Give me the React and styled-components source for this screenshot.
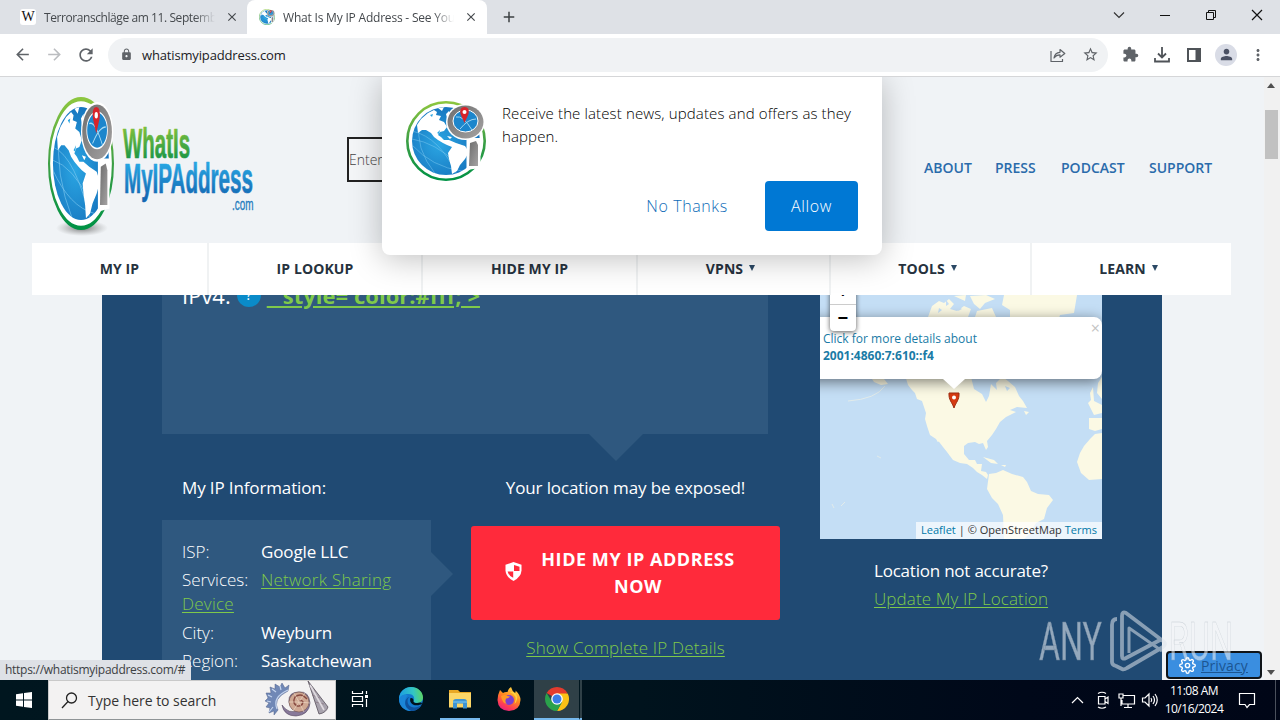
import React from 'react'
import styled, { createGlobalStyle, css } from 'styled-components'
import {
  MdArrowBack, MdArrowForward, MdRefresh, MdLock, MdStarBorder, MdExtension,
  MdPerson, MdMoreVert, MdClose, MdAdd
} from 'react-icons/md'
import { FiSettings } from 'react-icons/fi'

const GlobalStyle = createGlobalStyle`
  * { box-sizing: border-box; }
  body {
    margin: 0;
    overflow: hidden;
    font-family: 'Open Sans', 'Noto Sans', sans-serif;
  }
  svg { display: block; flex: none; }
  button, input { font: inherit; }
`

const Screen = styled.div`
  position: relative;
  width: 1280px;
  height: 720px;
  display: flex;
  flex-direction: column;
  overflow: hidden;
`

/* ---------- browser chrome ---------- */

const TabStrip = styled.div`
  height: 34px;
  background: #dee1e6;
  display: flex;
  align-items: stretch;
`

const Tab = styled.div`
  width: ${({ $active }) => ($active ? 240 : 247)}px;
  padding: ${({ $active }) => ($active ? '0 9px 0 12px' : '0 8px 0 20px')};
  background: ${({ $active }) => ($active ? '#fff' : 'transparent')};
  border-radius: 8px 8px 0 0;
  display: flex;
  align-items: center;
  color: #45494d;
`

const TabTitle = styled.span`
  width: 171px;
  margin: 0 auto 0 8px;
  overflow: hidden;
  white-space: nowrap;
  font-size: 12px;
  letter-spacing: ${({ $ls }) => $ls || 0}px;
  mask-image: linear-gradient(90deg, #000 88%, transparent);
`

const WikiIcon = styled.span`
  width: 16px;
  height: 16px;
  border-radius: 3px;
  background: #fff;
  color: #111;
  font: 400 14px/16px 'Liberation Serif', serif;
  text-align: center;
`

const NewTab = styled.div`
  display: flex;
  align-items: center;
  padding-left: 13px;
  color: #3c4043;
`

const WindowButtons = styled.div`
  margin-left: auto;
  display: flex;
  align-items: center;
  padding: 0 0 5px;

  svg { margin-right: 30px; }
  svg:first-child { margin-right: 32px; }
  svg:last-child { margin-right: 15px; }
`

const Toolbar = styled.div`
  height: 43px;
  padding: 0 6px 1px;
  background: #fff;
  border-bottom: 1px solid #d5d6d8;
  display: flex;
  align-items: center;
  color: #5f6368;
`

const IconSlot = styled.span`
  width: 32px;
  height: 32px;
  flex: none;
  display: grid;
  place-items: center;
`

const Omnibox = styled.div`
  width: 1000px;
  height: 34px;
  flex: none;
  margin: 0 6px;
  padding: 0 2px;
  border-radius: 17px;
  background: #f0f2f4;
  display: flex;
  align-items: center;
`

const Url = styled.span`
  margin-right: auto;
  color: #202124;
  font-size: 13px;
  letter-spacing: -0.15px;
`

const Avatar = styled.span`
  width: 22px;
  height: 22px;
  border-radius: 50%;
  background: #d9dce6;
  color: #4b5164;
  display: grid;
  place-items: center;
`

/* ---------- page ---------- */

const Viewport = styled.div`
  position: relative;
  height: 603px;
  display: flex;
`

const Page = styled.div`
  width: 1264px;
  height: 603px;
  overflow: hidden;
  background: #f0f3f6;
`

const Scrollbar = styled.div`
  width: 16px;
  padding: 6px 2px 5px 0;
  background: #f1f1f1;
  display: flex;
  flex-direction: column;
  align-items: center;
`

const Thumb = styled.div`
  width: 13px;
  height: 49px;
  margin: 22px 0 auto;
  background: #c1c1c1;
`

const Triangle = styled.i`
  border: 4px solid transparent;
  ${({ $down }) => $down
    ? css`border-top: 5px solid #505050; border-bottom: 0;`
    : css`border-bottom: 5px solid #505050; border-top: 0;`}
`

const SiteHeader = styled.header`
  height: 166px;
  padding: 0 51px 0 48px;
  display: flex;
`

const SearchInput = styled.input`
  width: 300px;
  height: 45px;
  margin: 60px 0 0 91px;
  padding: 0;
  border: 2px solid #222;
  background: #f4f6f8;
  font-size: 14px;
  font-weight: 300;

  &::placeholder { color: #444; opacity: 1; }
`

const TopLinks = styled.nav`
  margin-left: auto;
  padding-top: 81px;
  display: flex;
  gap: 24px;
`

const TopLink = styled.a`
  width: ${({ $w }) => $w}px;
  color: #2a6bab;
  font-size: 14px;
  font-weight: 600;
  line-height: 20px;
  white-space: nowrap;
`

const MainNav = styled.nav`
  width: 1199px;
  height: 52px;
  margin-left: 32px;
  background: #fff;
  display: flex;
`

const NavItem = styled.a`
  width: ${({ $w }) => $w}px;
  padding: 0 ${({ $menu }) => ($menu ? 6 : 0)}px 2px 0;
  display: flex;
  align-items: center;
  justify-content: center;
  gap: 6px;
  border-right: 2px solid #f0f2f3;
  color: #26323e;
  font-size: 14px;
  font-weight: 700;
  letter-spacing: 0.1px;

  &:last-child { border-right: 0; }
`

const Caret = styled.i`
  border: 3.5px solid transparent;
  border-top: 6px solid #2b4965;
  border-bottom: 0;
`

const Panel = styled.main`
  width: 1060px;
  height: 385px;
  margin-left: 102px;
  padding: 0 60px;
  background: #204a73;
  color: #fff;
  display: flex;
  gap: 40px;
  overflow: hidden;
`

const Details = styled.section`
  width: 618px;
`

const AddressBox = styled.div`
  width: 606px;
  height: 139px;
  padding-left: 20px;
  background: #2f587f;
  overflow: hidden;
`

const AddressRow = styled.div`
  height: 32px;
  margin-top: -16px;
  display: flex;
  align-items: center;
  font-size: 22px;
  white-space: nowrap;
`

const Help = styled.span`
  width: 24px;
  height: 24px;
  margin: 0 6px 0 6px;
  border-radius: 50%;
  background: #0a8bc9;
  font-size: 14px;
  line-height: 24px;
  text-align: center;
`

const Link = styled.a`
  color: #7fc94a;
  text-decoration: underline;
  font-weight: ${({ $bold }) => ($bold ? 700 : 300)};
  letter-spacing: ${({ $ls }) => $ls || 0}px;
  text-underline-offset: 2px;
`

const DownNotch = styled.div`
  width: 0;
  margin-left: 427px;
  border: 27px solid transparent;
  border-top-color: #2f587f;
  border-bottom: 0;
`

const Columns = styled.div`
  display: flex;
  gap: 40px;
  font-size: 17px;
  font-weight: 300;
`

const Column = styled.div`
  width: ${({ $w }) => $w}px;
  padding-top: 15px;
`

const Title = styled.h2`
  margin: 0;
  padding-left: ${({ $center }) => ($center ? 0 : 20)}px;
  text-align: ${({ $center }) => ($center ? 'center' : 'left')};
  font-size: 17px;
  font-weight: 400;
  line-height: 24px;
  letter-spacing: -0.13px;
  white-space: nowrap;
`

const InfoBox = styled.div`
  height: 160px;
  margin-top: 20px;
  background: #2f587f;
  display: flex;
`

const InfoList = styled.ul`
  width: 269px;
  flex: none;
  margin: 0;
  padding: 20px 20px 0;
  list-style: none;
`

const InfoRow = styled.li`
  margin-bottom: 4.3px;
  line-height: 24px;
`

const InfoLabel = styled.span`
  display: inline-block;
  width: 79px;
`

const InfoValue = styled.span`
  font-weight: 400;
  letter-spacing: -0.14px;
`

const RightNotch = styled.div`
  flex: none;
  height: 0;
  margin-top: 32px;
  border: 22px solid transparent;
  border-left-color: #2f587f;
  border-right: 0;
`

const HideButton = styled.button`
  width: 309px;
  height: 94px;
  margin: 26px 0 15px;
  padding: 0 35px 0 34px;
  border: 0;
  border-radius: 3px;
  background: #ff2a3b;
  color: #fff;
  display: flex;
  align-items: center;
  justify-content: space-between;
  font-size: 18px;
  font-weight: 700;
  line-height: 27px;
  letter-spacing: 0.55px;

  svg { margin-bottom: 3px; }
`

const HideLabel = styled.span`
  width: 214px;
`

const Centered = styled.div`
  text-align: center;
  line-height: 26px;
`

const MapColumn = styled.section`
  width: 282px;
  font-size: 17px;
`

const MapNote = styled.div`
  margin: 18px 0 0 54px;
  line-height: 28px;
  letter-spacing: -0.22px;
  white-space: nowrap;
`

const MapCanvas = styled.div`
  position: relative;
  width: 282px;
  height: 244px;
  overflow: hidden;
  background: #c4def5;
`

const MapPopup = styled.div`
  position: absolute;
  top: 22px;
  left: -20px;
  width: 302px;
  height: 62px;
  padding: 13px 8px 0 23px;
  border-radius: 8px;
  background: #fff;
  box-shadow: 0 3px 14px rgba(0, 0, 0, 0.5);
  color: #1a7ba6;
  font-size: 12px;
  line-height: 17px;
`

const PopupTip = styled.i`
  position: absolute;
  top: 84px;
  left: 123px;
  border: 11px solid transparent;
  border-top: 10px solid #fff;
  border-bottom: 0;
`

const PopupClose = styled.span`
  position: absolute;
  top: 3px;
  right: 2px;
  color: #c3c3c3;
  font-size: 16px;
`

const ZoomControl = styled.div`
  position: absolute;
  top: -17px;
  left: 10px;
  width: 26px;
  height: 53px;
  border-radius: 4px;
  background: #fff;
  box-shadow: 0 1px 5px rgba(0, 0, 0, 0.65);
  color: #000;
  font: 700 18px/26px 'Liberation Mono', monospace;
  text-align: center;

  div:first-child { border-bottom: 1px solid #ccc; height: 27px; line-height: 28px; }
  div:last-child { line-height: 28px; }
`

const Attribution = styled.div`
  position: absolute;
  right: 0;
  bottom: 0;
  width: 186px;
  height: 17px;
  padding-left: 5px;
  background: rgba(255, 255, 255, 0.7);
  color: #333;
  font-size: 11px;
  line-height: 16px;
  letter-spacing: 0.03px;
  white-space: nowrap;

  a { color: #0078a8; }
`

/* ---------- things lying over the page ---------- */

const Prompt = styled.div`
  position: absolute;
  top: 0;
  left: 382px;
  width: 500px;
  height: 178px;
  padding: 24px;
  border-radius: 0 0 8px 8px;
  background: #fff;
  box-shadow: 0 4px 32px rgba(0, 0, 0, 0.25);
  clip-path: inset(0 -60px -60px -60px);
  display: grid;
  grid-template: 80px 50px / 80px 1fr;
  column-gap: 16px;
`

const PromptText = styled.p`
  margin: 1px -10px 0 0;
  color: #000;
  font-size: 15px;
  font-weight: 300;
  line-height: 23px;
  letter-spacing: 0.13px;
`

const PromptActions = styled.div`
  grid-column: 1 / 3;
  display: flex;
  justify-content: flex-end;
  gap: 14px;
`

const PromptButton = styled.button`
  width: ${({ $primary }) => ($primary ? 93 : 128)}px;
  height: 50px;
  padding: 0;
  border: 0;
  border-radius: 4px;
  background: ${({ $primary }) => ($primary ? '#0078d4' : 'transparent')};
  color: ${({ $primary }) => ($primary ? '#fff' : '#0f6cb8')};
  font-size: 16px;
  font-weight: 300;
  letter-spacing: 0.6px;
`

const StatusBubble = styled.div`
  position: absolute;
  left: 0;
  bottom: 0;
  width: 191px;
  height: 20px;
  padding-left: 5px;
  border-radius: 0 3px 0 0;
  background: #dee1e6;
  color: #3c4043;
  font-size: 12px;
  line-height: 20px;
  letter-spacing: -0.27px;
  white-space: nowrap;
`

const PrivacyButton = styled.button`
  position: absolute;
  right: 18px;
  bottom: 1px;
  width: 96px;
  height: 28px;
  padding: 0 0 0 11px;
  border: 2px solid #101418;
  border-radius: 4px;
  background: #3a8ee0;
  color: #fff;
  display: flex;
  align-items: center;
  gap: 5px;

  span {
    color: #1c5591;
    font-size: 14px;
    letter-spacing: 0.1px;
    text-decoration: underline;
  }
`

const Watermark = styled.div`
  position: absolute;
  left: 1034px;
  top: 604px;
  opacity: 0.55;
`

/* ---------- taskbar ---------- */

const Taskbar = styled.div`
  height: 40px;
  background: linear-gradient(90deg, #00161f 0%, #00131d 50%, #000819 80%, #000617 100%);
  color: #fff;
  display: flex;
`

const StartButton = styled.div`
  width: 48px;
  display: grid;
  place-items: center;
`

const SearchBox = styled.div`
  width: 288px;
  height: 40px;
  padding: 0 5px 0 12px;
  border: 1px solid #c9c9c9;
  border-bottom-color: #8f9496;
  background: #f3f2f2;
  color: #333;
  display: flex;
  align-items: center;
  font-size: 14px;
  letter-spacing: -0.03px;

  span { margin: 0 auto 0 10px; }
`

const TaskItem = styled.div`
  width: ${({ $w }) => $w || 49}px;
  height: 40px;
  display: grid;
  place-items: center;
  background: ${({ $active }) => ($active ? '#2f4047' : 'transparent')};
  border-bottom: 2px solid transparent;
  ${({ $running }) => $running && css`border-bottom-color: #76b9ed;`}
`

const TaskGap = styled.div`
  width: ${({ $w }) => $w}px;
  border-left: ${({ $line }) => ($line ? '1px solid #00161f' : '0')};
  background: ${({ $line }) => ($line ? '#2f4047' : 'transparent')};
  border-bottom: ${({ $line }) => ($line ? '2px solid #76b9ed' : '0')};
`

const Tray = styled.div`
  margin-left: auto;
  padding-right: 4px;
  display: flex;
  align-items: center;
`

const Clock = styled.div`
  width: 64px;
  margin: 0 12px 0 -1px;
  font-size: 12px;
  line-height: 18px;
  text-align: center;
  white-space: nowrap;
  letter-spacing: -0.5px;
`

const ShowDesktop = styled.i`
  width: 1px;
  height: 40px;
  margin-left: 19px;
  background: #4a505c;
`

/* Globe with the magnifier shaped like a letter "i" */
const Globe = ({ width, height, id }) => (
  <svg width={width} height={height} viewBox="0 0 80 80" preserveAspectRatio="none">
    <defs>
      <linearGradient id={id + 'ring'} x1="0" y1="0" x2="0" y2="1">
        <stop offset="0" stopColor="#8cc63f" />
        <stop offset="0.5" stopColor="#3d9f45" />
        <stop offset="1" stopColor="#009245" />
      </linearGradient>
      <radialGradient id={id + 'sea'} cx="0.4" cy="0.55" r="0.6">
        <stop offset="0" stopColor="#2ba6e3" />
        <stop offset="1" stopColor="#1573bd" />
      </radialGradient>
      <linearGradient id={id + 'steel'} x1="0" y1="0" x2="1" y2="1">
        <stop offset="0" stopColor="#6d6d6d" />
        <stop offset="1" stopColor="#a5a3a3" />
      </linearGradient>
      <clipPath id={id + 'clip'}><circle cx="40" cy="40" r="34" /></clipPath>
    </defs>
    <circle cx="40" cy="40" r="38.7" fill="#fff" stroke={`url(#${id}ring)`} strokeWidth="2.6" />
    <circle cx="40" cy="40" r="34" fill={`url(#${id}sea)`} />
    <g clipPath={`url(#${id}clip)`}>
      <g fill="none" stroke="#7fcaf0" strokeWidth="0.5">
        <path d="M6 30Q34 36 52 76M6 44Q26 66 56 70M14 22Q8 46 30 74M6 38Q30 42 50 62" />
      </g>
      <path fill="#fff" d="M11 24L15 18L22 12L28 9L31 11L30 14L35 15L33 19L38 21L41 26L38 30L34 31L32 34L35 36L38 39L43 39L50 42L59 45L63 51L59 58L54 64L51 70L46 73L45 65L43 58L42 52L46 46L41 44L37 42L32 39L28 36L25 32L20 29L16 29L12 32Z" />
      <path fill="#fff" d="M32 7L38 6L36 10ZM40 13L43 10L44 15L41 17ZM41 35L46 36L44 38Z" />
      <path fill="#2ba6e3" d="M31 32L34 29L33 33ZM24 14L27 13L26 16Z" />
    </g>
    <path d="M60.500 37L74.500 37L74.500 67L60.500 69Z" fill="#fff" />
    <path d="M64 42L70 40L72 44L72 65L63 65Z" fill={`url(#${id}steel)`} />
    <ellipse cx="59.500" cy="21" rx="19.500" ry="18" fill="#fff" />
    <ellipse cx="59.500" cy="21" rx="18" ry="16.500" fill={`url(#${id}steel)`} />
    <ellipse cx="59.500" cy="20" rx="12.500" ry="11" fill="#1c86cc" stroke="#fff" />
    <path d="M50 16Q57 14 66 29M54 28Q62 18 70 18" fill="none" stroke="#aadcf4" strokeWidth="0.9" />
    <path d="M58.500 22L54.500 13Q53 6 58.500 6Q64 6 62.500 13Z" fill="#d8232a" />
    <circle cx="58.500" cy="11" r="2" fill="#fff" />
  </svg>
)

const SiteLogo = () => (
  <svg width="208" height="166" viewBox="0 0 208 166">
    <defs>
      <linearGradient id="lgGreen" x1="0" y1="0" x2="0" y2="1">
        <stop offset="0.2" stopColor="#7cbf3c" />
        <stop offset="0.9" stopColor="#129247" />
      </linearGradient>
      <linearGradient id="lgBlue" x1="0" y1="0" x2="0" y2="1">
        <stop offset="0.2" stopColor="#27a5e1" />
        <stop offset="0.9" stopColor="#1468b3" />
      </linearGradient>
      <radialGradient id="lgShade">
        <stop offset="0" stopColor="#555" stopOpacity="0.8" />
        <stop offset="1" stopColor="#888" stopOpacity="0" />
      </radialGradient>
    </defs>
    <ellipse cx="34" cy="151" rx="26" ry="8" fill="url(#lgShade)" />
    <g transform="translate(0 20)">
      <Globe width="66" height="133" id="big" />
    </g>
    <g fontFamily="'Liberation Sans Narrow', 'Liberation Sans', sans-serif" fontWeight="700" strokeLinejoin="round" strokeWidth="0.7">
      <text x="75" y="81" fontSize="43" textLength="67" lengthAdjust="spacingAndGlyphs" fill="url(#lgGreen)" stroke="url(#lgGreen)">WhatIs</text>
      <text x="76" y="116" fontSize="42" textLength="129" lengthAdjust="spacingAndGlyphs" fill="url(#lgBlue)" stroke="url(#lgBlue)">MyIPAddress</text>
      <text x="184" y="132.500" fontSize="17" fontWeight="400" textLength="21.500" lengthAdjust="spacingAndGlyphs" fill="#1f7bbd" stroke="#1f7bbd" strokeWidth="0.300">.com</text>
    </g>
  </svg>
)

const ShieldIcon = () => (
  <svg width="17" height="19" viewBox="0 0 17 19">
    <path d="M8.500 0L16.500 2.800V8.500Q16 15 8.500 19Q1 15 .500 8.500V2.800Z" fill="#fff" />
    <path d="M9 3L14.500 4.800V9H9ZM2.600 9.500H8.200V15.800Q3.500 13.500 2.600 9.500Z" fill="#ff2a3b" />
  </svg>
)

const WorldMap = () => (
  <svg width="282" height="244" viewBox="0 0 282 244">
    <g fill="#fbf9e4">
      <path d="M85 80L88 90L92 95L95 98L97 104L102 106L104 112L106 118L105 124L107 131L110 140L116 144L119 149L125 155L130 161L133 165L140 168L147 169L153 173L157 177L162 180L167 184L168 180L166 177L161 176L162 169L157 169L155 165L149 165L144 159L144 151L148 148L155 147L159 149L163 148L166 155L168 152L167 146L172 140L176 134L180 127L186 122L192 119L196 117L190 115L197 112L207 113L203 106L199 101L195 92L188 86L180 80Z" />
      <path d="M169 179L176 178L183 175L192 179L203 182L207 187L211 196L218 199L229 200L233 205L227 213L224 224L216 228L210 238L204 244L184 244L183 220L178 209L172 203L167 194Z" />
      <path d="M282 138L275 139L270 144L264 151L260 158L257 167L261 178L269 185L282 184Z" />
      <path d="M269 123L282 123L282 134L275 136L269 134ZM268 108L271 105L270 98L273 92L274 106L282 110L282 118L274 120ZM278 88L282 82V104L277 98Z" />
      <path d="M184 0L257 0L254 18L240 20L238 26L190 26L190 15L182 10Z" />
      <path d="M112 11L119 6L124 8L129 4L134 9L130 14L137 16L144 11L151 14L148 22L108 22ZM134 1L146 0L145 6ZM150 1L166 0L175 4L165 8L160 14L154 9ZM157 16L172 13L176 22L155 22Z" />
      <path d="M52 84L64 84L68 89L61 90L54 87ZM163 162L174 165L178 169L171 168ZM181 170L186 170L185 172ZM204 116L209 117L206 120Z" />
    </g>
    <g fill="#c4def5">
      <path d="M151 82L184 80L176 88L177 95L171 89L169 101L166 107L162 99L154 94Z" />
      <path d="M126 5L129 9L126 11ZM139 12L142 14L138 16ZM119 13L122 15L118 18ZM185 91L190 93L187 96Z" />
    </g>
    <path d="M118 147L128 160" stroke="#c4def5" strokeWidth="2" fill="none" />
    <path d="M28 106Q56 104 65 91M57 161L61 163M12 209L14 213M21 211L25 207" stroke="#e2ebea" strokeWidth="1" fill="none" />
    <path d="M134 113C132 107 128.500 105 129 98H139C139.500 105 136 107 134 113Z" fill="#d63a12" stroke="#9e2b10" />
    <circle cx="134" cy="102.500" r="2" fill="#fff" />
  </svg>
)

const DownloadIcon = () => (
  <svg width="16" height="16" viewBox="0 0 16 16" fill="none" stroke="#4f5358" strokeWidth="1.8">
    <path d="M8 0V10M4 6.500L8 10.500L12 6.500M1 11V14.500H15V11" />
  </svg>
)

const ShareIcon = () => (
  <svg width="16" height="16" viewBox="0 0 16 16" fill="none" stroke="#5f6368" strokeWidth="1.200" strokeLinejoin="round">
    <path d="M1 4V14.500H12.500V12M4 11C4.500 7 7 5.500 10 5.300V2.500L14.800 6.500L10 10.200V7.800C7.500 7.800 5.500 8.800 4 11Z" />
  </svg>
)

const SidePanelIcon = () => (
  <svg width="16" height="16">
    <path d="M2 2H14V14H2Z" fill="none" stroke="#4f5358" strokeWidth="2" />
    <path d="M9.500 2H14V14H9.500Z" fill="#4f5358" />
  </svg>
)

const Shells = () => (
  <svg width="66" height="38" viewBox="0 0 66 38">
    <g fill="#7088b6" stroke="#50618a" strokeWidth="0.5">
      <path d="M24 10L25 4L21 7L18 2L16 6L11 3L11 8L6 6L7 12L2 12L4 17L1 20L5 22L2 26L6 27L5 32L10 30L10 34L14 29Q8 18 24 10Z" />
    </g>
    <path d="M13 28Q8 16 24 9M9 26L5 31M7 21L3 20M8 16L4 14M12 11L8 8M17 9L16 5" fill="none" stroke="#c4d4ee" strokeWidth="1.200" />
    <path d="M18 24Q20 35 32 35Q45 34 46 22Q45 10 35 11Q24 11 25 21Q27 29 34 29Q25 34 18 24Z" fill="#87799a" stroke="#54465e" strokeWidth="0.6" />
    <circle cx="35" cy="21" r="10" fill="#cfa893" stroke="#7d5d58" strokeWidth="0.7" />
    <path d="M35 21Q37 18 39 21Q38 26 33 25Q28 22 31 16Q37 11 43 18" fill="none" stroke="#86483f" strokeWidth="1.400" />
    <path d="M35 21L30 12M35 21L41 12M35 21L46 22M35 21L40 31M35 21L29 30M35 21L25 21" stroke="#f1ddcb" strokeWidth="0.6" />
    <path d="M44 0L64 26Q62 32 55 33Z" fill="#a8a3ad" stroke="#58505c" strokeWidth="0.8" />
    <path d="M46 7L52 11M48 14L56 17M51 21L60 23" stroke="#8a7a85" strokeWidth="0.8" />
    <path d="M46 4L60 29" stroke="#e0dbe0" strokeWidth="1.600" />
  </svg>
)

const EdgeIcon = () => (
  <svg width="24" height="24" viewBox="0 0 24 24">
    <defs>
      <linearGradient id="edgeTop" x1="0" y1="0.4" x2="1" y2="0.3">
        <stop offset="0" stopColor="#1b9de2" />
        <stop offset="0.6" stopColor="#33c6c4" />
        <stop offset="1" stopColor="#5fd65a" />
      </linearGradient>
    </defs>
    <circle cx="12" cy="12" r="12" fill="#1279cf" />
    <path d="M0 11C1 4 6 0 12 0C19 0 24 5 24 10.500C24 14 21.500 16 18.500 16C15.500 16 14 15 14.500 14C16 12 15.500 7 9.500 7C5 7 1 9 0 13Z" fill="url(#edgeTop)" />
    <path d="M9 8.500C5 11 4 21 13 23.800C7 24.800 0 20 0 12C1.500 8 6 7 9 8.500Z" fill="#1b86d8" />
    <path d="M10.500 10C7 12 8 20 15 20.500C18 20.600 20.500 19.500 22.500 18C20 22.500 16 24 12.500 23.900C4 21 5 11 10.500 10Z" fill="#0f529e" />
    <path d="M11.500 11C10 15 13 18.500 18 18.300C20 18.200 21.500 17.600 23 17C23 16 22 15.500 21 15.600C18 16.500 14 16 14.500 14C15 12.500 13.500 10.500 11.500 11Z" fill="#00131d" />
  </svg>
)

const FolderIcon = () => (
  <svg width="22" height="20" viewBox="0 0 22 20">
    <path d="M0 1H9L11 3H22V18H0Z" fill="#e9a825" />
    <path d="M0 4H22V18.500H0Z" fill="#fcd667" />
    <path d="M4 19.500V13Q4 10 7 10H15Q18 10 18 13V19.500H14V14.500H8V19.500Z" fill="#3f94d1" />
    <path d="M4 14H18V12H4Z" fill="#5eb0e4" />
  </svg>
)

const FirefoxIcon = () => (
  <svg width="24" height="24" viewBox="0 0 24 24">
    <defs>
      <linearGradient id="fox" x1="0.800" y1="0" x2="0.300" y2="1">
        <stop offset="0" stopColor="#ffe14a" />
        <stop offset="0.450" stopColor="#ff8a1f" />
        <stop offset="0.800" stopColor="#ff3b57" />
        <stop offset="1" stopColor="#e5237f" />
      </linearGradient>
    </defs>
    <path d="M3 3L6 6Q8 4.500 10.500 5Q11 2 14 0Q15 4 18 6Q19 5 18.500 3.500Q23.500 8 23.500 13Q23 23.500 12 24Q1 23.500 .500 13Q.500 8 3 3Z" fill="url(#fox)" />
    <circle cx="12" cy="13" r="5" fill="#7d3fd0" />
    <path d="M4 9Q8 7 10.500 9L13 9.500Q11 12 9 11.500Q7.500 15 10 17Q5 16 4 9Z" fill="#ff9a26" />
    <path d="M13 5Q21 8 17.500 17Q22 12 19 7L16 5Z" fill="#ffd23c" />
  </svg>
)

const ChromeIcon = () => (
  <svg width="24" height="24" viewBox="0 0 24 24">
    <path d="M12 12L1.610 6A12 12 0 0 1 22.390 6Z" fill="#e33b2e" />
    <path d="M12 6.500H22.700A12 12 0 0 1 12 24L17 15Z" fill="#fbc116" />
    <path d="M1.610 6L7.200 15L12 17.500L17 15L12 24A12 12 0 0 1 1.610 6Z" fill="#2aa24b" />
    <circle cx="12" cy="12" r="5.800" fill="#fff" />
    <circle cx="12" cy="12" r="4.500" fill="#3b7de8" />
  </svg>
)

const tray = { fill: 'none', stroke: '#fff', strokeWidth: 1.2 }

const infoRows = [
  { label: 'ISP:', value: 'Google LLC' },
  { label: 'Services:', value: 'Network Sharing Device', link: true },
  { label: 'City:', value: 'Weyburn' },
  { label: 'Region:', value: 'Saskatchewan' }
]

const navItems = [
  { text: 'MY IP', w: 177 },
  { text: 'IP LOOKUP', w: 214 },
  { text: 'HIDE MY IP', w: 215 },
  { text: 'VPNS', w: 193, menu: true },
  { text: 'TOOLS', w: 201, menu: true },
  { text: 'LEARN', w: 199, menu: true }
]

export default function App() {
  return (
    <Screen>
      <GlobalStyle />

      <TabStrip>
        <Tab>
          <WikiIcon>W</WikiIcon>
          <TabTitle $ls={-0.42}>Terroranschläge am 11. September</TabTitle>
          <MdClose size={14} />
        </Tab>
        <Tab $active>
          <Globe width="16" height="16" id="fav" />
          <TabTitle $ls={-0.2}>What Is My IP Address - See Your</TabTitle>
          <MdClose size={14} />
        </Tab>
        <NewTab><MdAdd size={18} /></NewTab>
        <WindowButtons>
          <svg width="12" height="12" fill="none" stroke="#333" strokeWidth="1.2"><path d="M1 3.500L6 8.500L11 3.500" /></svg>
          <svg width="16" height="12" stroke="#111"><path d="M3 6.500H13" /></svg>
          <svg width="16" height="12" fill="none" stroke="#111"><path d="M3.500 3.500H10.500V10.500H3.500ZM5.500 3.500V1.500H12.500V8.500H10.500" /></svg>
          <svg width="16" height="12" stroke="#111" strokeWidth="1.2"><path d="M3 1L13 11M13 1L3 11" /></svg>
        </WindowButtons>
      </TabStrip>

      <Toolbar>
        <IconSlot><MdArrowBack size={19} /></IconSlot>
        <IconSlot><MdArrowForward size={19} color="#bbbdc0" /></IconSlot>
        <IconSlot><MdRefresh size={20} /></IconSlot>
        <Omnibox>
          <IconSlot><MdLock size={13} /></IconSlot>
          <Url>whatismyipaddress.com</Url>
          <IconSlot><ShareIcon /></IconSlot>
          <IconSlot><MdStarBorder size={17} /></IconSlot>
        </Omnibox>
        <IconSlot><MdExtension size={17} /></IconSlot>
        <IconSlot><DownloadIcon /></IconSlot>
        <IconSlot><SidePanelIcon /></IconSlot>
        <IconSlot><Avatar><MdPerson size={17} /></Avatar></IconSlot>
        <IconSlot><MdMoreVert size={18} /></IconSlot>
      </Toolbar>

      <Viewport>
        <Page>
          <SiteHeader>
            <SiteLogo />
            <SearchInput placeholder="Enter Keywords or IP Address..." />
            <TopLinks>
              <TopLink $w={47}>ABOUT</TopLink>
              <TopLink $w={42}>PRESS</TopLink>
              <TopLink $w={64}>PODCAST</TopLink>
              <TopLink $w={64}>SUPPORT</TopLink>
            </TopLinks>
          </SiteHeader>
          <MainNav>
            {navItems.map(item => (
              <NavItem key={item.text} $w={item.w} $menu={item.menu}>
                {item.text}
                {item.menu && <Caret />}
              </NavItem>
            ))}
          </MainNav>
          <Panel>
            <Details>
              <AddressBox>
                <AddressRow>
                  IPv4:
                  <Help>?</Help>
                  <Link $bold>" style='color:#fff;'&gt;</Link>
                </AddressRow>
              </AddressBox>
              <DownNotch />
              <Columns>
                <Column $w={269}>
                  <Title>My IP Information:</Title>
                  <InfoBox>
                    <InfoList>
                      {infoRows.map(row => (
                        <InfoRow key={row.label}>
                          <InfoLabel>{row.label}</InfoLabel>
                          {row.link
                            ? <Link $ls={0.26}>{row.value}</Link>
                            : <InfoValue>{row.value}</InfoValue>}
                        </InfoRow>
                      ))}
                    </InfoList>
                    <RightNotch />
                  </InfoBox>
                </Column>
                <Column $w={309}>
                  <Title $center>Your location may be exposed!</Title>
                  <HideButton>
                    <ShieldIcon />
                    <HideLabel>HIDE MY IP ADDRESS NOW</HideLabel>
                  </HideButton>
                  <Centered><Link $ls={0.17}>Show Complete IP Details</Link></Centered>
                </Column>
              </Columns>
            </Details>
            <MapColumn>
              <MapCanvas>
                <WorldMap />
                <MapPopup>
                  Click for more details about<br />
                  <b>2001:4860:7:610::f4</b>
                  <PopupClose>×</PopupClose>
                </MapPopup>
                <PopupTip />
                <ZoomControl>
                  <div>+</div>
                  <div>−</div>
                </ZoomControl>
                <Attribution><a>Leaflet</a> | © OpenStreetMap <a>Terms</a></Attribution>
              </MapCanvas>
              <MapNote>
                Location not accurate?<br />
                <Link $ls={0.11}>Update My IP Location</Link>
              </MapNote>
            </MapColumn>
          </Panel>
        </Page>
        <Scrollbar>
          <Triangle />
          <Thumb />
          <Triangle $down />
        </Scrollbar>

        <Prompt>
          <Globe width="80" height="80" id="prompt" />
          <PromptText>Receive the latest news, updates and offers as they happen.</PromptText>
          <PromptActions>
            <PromptButton>No Thanks</PromptButton>
            <PromptButton $primary>Allow</PromptButton>
          </PromptActions>
        </Prompt>
        <StatusBubble>https://whatismyipaddress.com/#</StatusBubble>
        <PrivacyButton>
          <FiSettings size={17} />
          <span>Privacy</span>
        </PrivacyButton>
      </Viewport>

      <Taskbar>
        <StartButton>
          <svg width="16" height="16" fill="#fff"><path d="M0 2.200L7 1.200V7.500H0ZM8 1L16 0V7.500H8ZM0 8.500H7V14.800L0 13.800ZM8 8.500H16V16L8 15Z" /></svg>
        </StartButton>
        <SearchBox>
          <svg width="17" height="17" fill="none" stroke="#222" strokeWidth="1.3"><circle cx="10.500" cy="6" r="5" /><path d="M7 9.500L1 16" /></svg>
          <span>Type here to search</span>
          <Shells />
        </SearchBox>
        <TaskItem $w={48}>
          <svg width="18" height="16" fill="none" stroke="#fff" strokeWidth="1.2"><path d="M1.500 0V2.500H11.500V0M1.500 5.500H11.500V10.500H1.500ZM1.500 16V13.500H11.500V16M15.500 0V3M15.500 8V16" /><path d="M14 4H17V7H14Z" fill="#fff" stroke="none" /></svg>
        </TaskItem>
        <TaskItem $w={54}><EdgeIcon /></TaskItem>
        <TaskGap $w={2} />
        <TaskItem $w={40} $running><FolderIcon /></TaskItem>
        <TaskGap $w={4} />
        <TaskItem $w={50}><FirefoxIcon /></TaskItem>
        <TaskItem $w={45} $active $running><ChromeIcon /></TaskItem>
        <TaskGap $w={3} $line />
        <Tray>
          <svg width="26" height="20" {...tray}><path d="M7 13L12.500 7.500L18 13" /></svg>
          <svg width="24" height="20" {...tray}><path d="M7.500 6.500H14V14H7.500ZM14 9L17 7V13.500L14 11.500M7 3.500Q11 1 15 3.500M7 17Q11 19.500 15 17" /></svg>
          <svg width="24" height="20" {...tray}><path d="M8 5.500H19.500V14H7V10M13 14V17M9 17.500H17M4 4H8V8H4ZM6 8V16" /></svg>
          <svg width="24" height="20" {...tray}><path d="M3.500 8H6L10 4V16L6 12H3.500ZM12 8Q13.500 10 12 12M14 6Q17 10 14 14M16 4Q20.500 10 16 16" /></svg>
          <Clock>11:08 AM<br />10/16/2024</Clock>
          <svg width="18" height="18" {...tray}><path d="M1.500 2.500H16.500V13.500H11.500L9 16.500L7 13.500H1.500Z" /></svg>
          <ShowDesktop />
        </Tray>
      </Taskbar>

      <Watermark>
        <svg width="204" height="74" viewBox="0 0 204 74">
          <g fill="#f4f6f8" stroke="#a3adb8" strokeWidth="0.4" fontFamily="Roboto, sans-serif" fontWeight="400" fontSize="53">
            <text x="5" y="56" textLength="63" lengthAdjust="spacingAndGlyphs">ANY</text>
            <text x="135" y="56" textLength="64" lengthAdjust="spacingAndGlyphs">RUN</text>
          </g>
          <g fill="none" stroke="#dfe6ec" strokeWidth="3.800" strokeLinejoin="round">
            <path d="M83 15Q78 15 78 21V58Q78 61 82 62L88 65Q90 66 93 64L129 43Q133 40 129 37L92 9Q88 7 88 12V52Q88 56 92 54L126 36" />
            <path d="M95 49V24L128 47" strokeWidth="3" />
          </g>
        </svg>
      </Watermark>
    </Screen>
  )
}
